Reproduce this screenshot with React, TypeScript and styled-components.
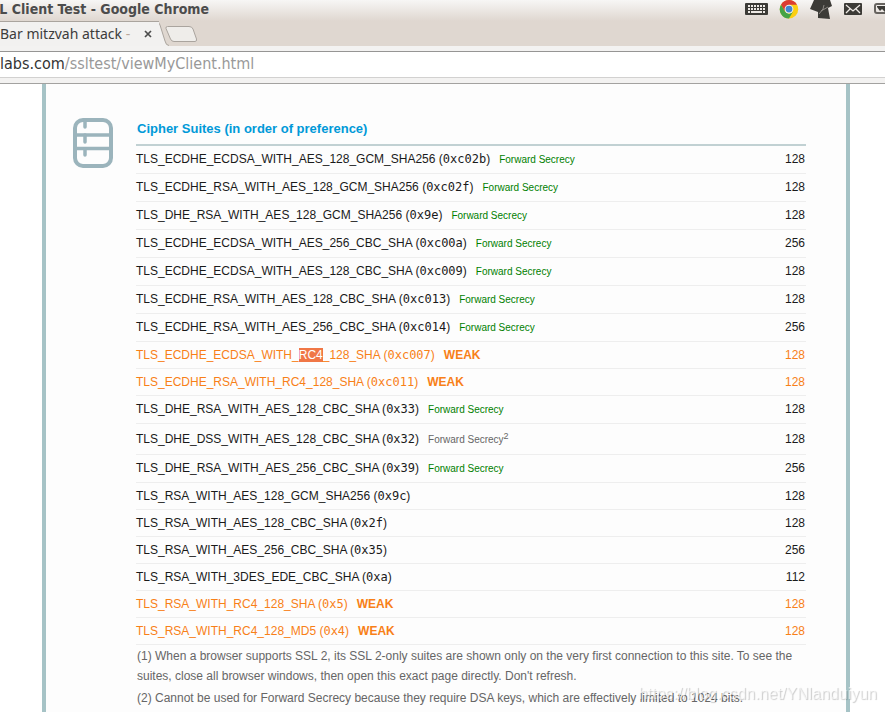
import React from "react";
import styled, { createGlobalStyle } from "styled-components";

const GlobalStyle = createGlobalStyle`
  * { box-sizing: border-box; }
  html { overflow: hidden; }
  body {
    margin: 0;
    background: #ffffff;
    color: #000000;
    font-family: "Liberation Sans", Arial, sans-serif;
    font-size: 12px;
  }
`;

const uiFont = `"Noto Sans", "Open Sans", sans-serif`;
const condensedFont = `"DejaVu Sans Condensed", "DejaVu Sans", sans-serif`;

const Browser = styled.div`
  display: flex;
  flex-direction: column;
  height: 100vh;
  overflow: hidden;
`;

const TitleBar = styled.header`
  display: flex;
  justify-content: space-between;
  flex: none;
  height: 21px;
  overflow: hidden;
  background: linear-gradient(#f7f6f5, #dfd7d0);
`;

const WindowTitle = styled.div`
  display: flex;
  justify-content: flex-end;
  width: 209px;
  overflow: hidden;
  color: #4c4c4c;
  font-family: ${condensedFont};
  font-size: 14px;
  font-weight: 700;
  line-height: 18px;
  white-space: nowrap;
`;

const Tray = styled.div`
  display: flex;
  align-items: flex-start;
  gap: 11px;
  overflow: hidden;

  svg { display: block; flex: none; }
`;

const TabStrip = styled.div`
  display: flex;
  flex: none;
  height: 25px;
  background: #dfd7d0;
`;

const Tab = styled.div`
  display: flex;
  align-items: center;
  width: 159px;
  height: 25px;
  background: #f2f1f0;
  border-top: 1px solid #aaa49e;
  font-family: ${uiFont};
  color: #3c3c3c;
  overflow: hidden;
`;

const TabTitle = styled.span`
  flex: 1;
  overflow: hidden;
  font-size: 14px;
  line-height: 22px;
  white-space: nowrap;
`;

const Fade = styled.span`
  color: #b9a79b;
`;

const TabClose = styled.button`
  display: flex;
  width: 22px;
  padding: 0 7px;
  border: 0;
  background: none;
`;

const NewTab = styled.button`
  display: block;
  height: 25px;
  padding: 0;
  border: 0;
  background: none;
`;

const Toolbar = styled.div`
  flex: none;
  height: 38px;
  padding: 5px 0;
  background: #f3f2f1;
  border-bottom: 1px solid #a3a2a0;
`;

const Address = styled.div`
  height: 27px;
  background: #ffffff;
  border-top: 1px solid #969594;
  border-bottom: 1px solid #d2d1d0;
  font-family: ${condensedFont};
  font-size: 16px;
  line-height: 24px;
  color: #333333;
  white-space: nowrap;
  outline: none;
`;

const Path = styled.span`
  color: #999999;
`;

const Page = styled.div`
  flex: 1;
  display: flex;
  min-height: 0;
  padding: 0 35px 0 42px;
  overflow: hidden;
`;

const Panel = styled.main`
  flex: 1;
  display: flex;
  align-items: flex-start;
  gap: 23px;
  padding: 34px 40px 0 27px;
  background: #fdfdfd;
  border: solid #a6c3c6;
  border-width: 0 4px;
`;

const SectionIcon = styled.svg`
  display: block;
  flex: none;
`;

const Section = styled.section`
  flex: 1;
`;

const SuiteTable = styled.table`
  width: 100%;
  border-collapse: separate;
  border-spacing: 0;
`;

const Heading = styled.th`
  height: 28px;
  padding: 1px 0 6px 1px;
  border-bottom: 2px solid #c1d1d3;
  color: #0099d8;
  font-size: 13px;
  line-height: 19px;
  text-align: left;
`;

type Kind = "secure" | "noted" | "weak" | "plain";

const rowHeights: Record<Kind, number> = { secure: 28, noted: 31, weak: 27, plain: 27 };

const SuiteRow = styled.tr<{ $kind: Kind }>`
  height: ${(p) => rowHeights[p.$kind]}px;
  color: ${(p) => (p.$kind === "weak" ? "#f88017" : "#1a1a1a")};
  vertical-align: ${(p) => (p.$kind === "noted" ? "middle" : "top")};
`;

const Cell = styled.td<{ $end?: boolean }>`
  padding: ${(p) => (p.$end ? "3px 1px 3px 0" : "3px 0")};
  border-bottom: 1px solid #eeeeee;
  line-height: 20px;
  text-align: ${(p) => (p.$end ? "right" : "left")};
  white-space: nowrap;
`;

const Code = styled.code`
  font-family: "DejaVu Sans Mono", monospace;
  font-size: 12px;
  line-height: 1;
`;

const Secrecy = styled.span<{ $muted?: boolean }>`
  margin-left: 9px;
  color: ${(p) => (p.$muted ? "#666666" : "#008000")};
  font-size: 10px;

  sup { font-size: 9px; line-height: 1; }
`;

const Weak = styled.b`
  margin-left: 9px;
`;

const Selected = styled.mark`
  background: #f07746;
  color: #ffffff;
`;

const Note = styled.p`
  margin: 1px 0 2px 1px;
  color: #666666;
  line-height: 20px;
`;

const Watermark = styled.div`
  position: fixed;
  right: 8px;
  bottom: 8px;
  color: rgba(255, 255, 255, 0.6);
  font-size: 16px;
  line-height: 20px;
  text-shadow: 1px 1px 1px rgba(0, 0, 0, 0.2);
  pointer-events: none;
`;

type Suite = { name: string; code: string; kind: Kind; bits: number; selected?: string };

const suites: Suite[] = [
  { name: "TLS_ECDHE_ECDSA_WITH_AES_128_GCM_SHA256", code: "0xc02b", kind: "secure", bits: 128 },
  { name: "TLS_ECDHE_RSA_WITH_AES_128_GCM_SHA256", code: "0xc02f", kind: "secure", bits: 128 },
  { name: "TLS_DHE_RSA_WITH_AES_128_GCM_SHA256", code: "0x9e", kind: "secure", bits: 128 },
  { name: "TLS_ECDHE_ECDSA_WITH_AES_256_CBC_SHA", code: "0xc00a", kind: "secure", bits: 256 },
  { name: "TLS_ECDHE_ECDSA_WITH_AES_128_CBC_SHA", code: "0xc009", kind: "secure", bits: 128 },
  { name: "TLS_ECDHE_RSA_WITH_AES_128_CBC_SHA", code: "0xc013", kind: "secure", bits: 128 },
  { name: "TLS_ECDHE_RSA_WITH_AES_256_CBC_SHA", code: "0xc014", kind: "secure", bits: 256 },
  { name: "TLS_ECDHE_ECDSA_WITH_RC4_128_SHA", code: "0xc007", kind: "weak", bits: 128, selected: "RC4" },
  { name: "TLS_ECDHE_RSA_WITH_RC4_128_SHA", code: "0xc011", kind: "weak", bits: 128 },
  { name: "TLS_DHE_RSA_WITH_AES_128_CBC_SHA", code: "0x33", kind: "secure", bits: 128 },
  { name: "TLS_DHE_DSS_WITH_AES_128_CBC_SHA", code: "0x32", kind: "noted", bits: 128 },
  { name: "TLS_DHE_RSA_WITH_AES_256_CBC_SHA", code: "0x39", kind: "secure", bits: 256 },
  { name: "TLS_RSA_WITH_AES_128_GCM_SHA256", code: "0x9c", kind: "plain", bits: 128 },
  { name: "TLS_RSA_WITH_AES_128_CBC_SHA", code: "0x2f", kind: "plain", bits: 128 },
  { name: "TLS_RSA_WITH_AES_256_CBC_SHA", code: "0x35", kind: "plain", bits: 256 },
  { name: "TLS_RSA_WITH_3DES_EDE_CBC_SHA", code: "0xa", kind: "plain", bits: 112 },
  { name: "TLS_RSA_WITH_RC4_128_SHA", code: "0x5", kind: "weak", bits: 128 },
  { name: "TLS_RSA_WITH_RC4_128_MD5", code: "0x4", kind: "weak", bits: 128 },
];

function SuiteName({ name, selected }: { name: string; selected?: string }) {
  if (!selected) return <>{name}</>;
  const [before, after] = name.split(selected);
  return <>{before}<Selected>{selected}</Selected>{after}</>;
}

function TrayIcons() {
  return (
    <Tray>
      <svg width="24" height="20" viewBox="0 0 24 20" aria-label="Keyboard">
        <rect x="1" y="3" width="23" height="12" rx="1" fill="#3c3b37" />
        <path d="M4 6h17M4 9h17" stroke="#eeeae6" strokeWidth="2" strokeDasharray="2 1" />
        <path d="M4 12h2M7 12h11M19 12h2" stroke="#eeeae6" strokeWidth="2" />
      </svg>
      <svg width="20" height="20" viewBox="0 0 20 20" aria-label="Chrome">
        <circle cx="10" cy="9.3" r="9.2" fill="#fbcf12" />
        <path d="M2 4.700A9.200 9.200 0 0 1 18 4.700H10L6 11.600Z" fill="#dc3c31" />
        <path d="M2 4.700A9.200 9.200 0 0 0 10 18.500L14 11.600L10 14L6 11.600Z" fill="#45a346" />
        <circle cx="10" cy="9.100" r="4.400" fill="#f2f2ed" />
        <circle cx="10" cy="9.100" r="3.400" fill="#4285cf" />
      </svg>
      <svg width="22" height="20" viewBox="0 0 22 20" aria-label="Input method">
        <path d="M4 0L20 0L22 6L18 8L20 19L8 18L8 12L0 9Z" fill="#3c3b37" />
        <path d="M9 14L13 9L14 5M11 11L18 7" fill="none" stroke="#8d8984" strokeWidth="1" />
      </svg>
      <svg width="19" height="20" viewBox="0 0 19 20" aria-label="Mail">
        <rect x="1" y="3" width="18" height="12" rx="1" fill="#3c3b37" />
        <path d="M3 5L10 11L17 5M3 13L7 9M17 13L13 9" fill="none" stroke="#eeeae6" strokeWidth="1.300" />
      </svg>
      <svg width="12" height="20" viewBox="0 0 12 20" aria-label="Battery">
        <path d="M14 4H4Q2 4 2 6V11Q2 13 4 13H14" fill="none" stroke="#66635f" strokeWidth="2" />
        <path d="M4 6H12V12L9 9L7 11L4 7Z" fill="#3c3b37" />
      </svg>
    </Tray>
  );
}

export default function App() {
  return (
    <>
      <GlobalStyle />
      <Browser>
        <TitleBar>
          <WindowTitle>L Client Test - Google Chrome</WindowTitle>
          <TrayIcons />
        </TitleBar>
        <TabStrip>
          <Tab>
            <TabTitle>Bar mitzvah attack <Fade>-</Fade></TabTitle>
            <TabClose aria-label="Close tab">
              <svg width="8" height="8" viewBox="0 0 8 8">
                <path d="M1 1L7 7M7 1L1 7" stroke="#4c4c4c" strokeWidth="1.700" />
              </svg>
            </TabClose>
          </Tab>
          <NewTab aria-label="New tab">
            <svg width="40" height="25" viewBox="4 0 40 25">
              <path d="M0 0.500H1Q4 0.500 5 4L10 20Q11 24.500 14 24.500V25H0Z" fill="#f2f1f0" />
              <path d="M0 0.500H1Q4 0.500 5 4L10 20Q11 24.500 14 24.500" fill="none" stroke="#aaa49e" />
              <path d="M12.500 5.500H34Q37 5.500 38 8L41.500 18Q42 20.500 40 20.500H19Q16.500 20.500 15.500 18L11 7.500Q10.500 5.500 12.500 5.500Z" fill="#efedea" stroke="#aaa49e" />
            </svg>
          </NewTab>
        </TabStrip>
        <Toolbar>
          <Address role="textbox" aria-label="Address" contentEditable suppressContentEditableWarning spellCheck={false}>
            labs.com<Path>/ssltest/viewMyClient.html</Path>
          </Address>
        </Toolbar>
        <Page>
          <Panel>
            <SectionIcon width="40" height="50" viewBox="0 0 40 50" aria-hidden="true">
              <g fill="none" stroke="#9bb4bc">
                <rect x="2" y="2" width="36" height="46" rx="8" strokeWidth="4" />
                <path d="M3 17H37M3 30.500H37" strokeWidth="3.500" />
                <path d="M12 3V9M12 17V24M12 31V37" strokeWidth="3.500" strokeLinecap="round" />
              </g>
            </SectionIcon>
            <Section>
              <SuiteTable>
                <thead>
                  <tr><Heading colSpan={2}>Cipher Suites (in order of preference)</Heading></tr>
                </thead>
                <tbody>
                  {suites.map((s) => (
                    <SuiteRow key={s.name} $kind={s.kind}>
                      <Cell>
                        <SuiteName name={s.name} selected={s.selected} /> (<Code>{s.code}</Code>)
                        {s.kind === "secure" && <Secrecy>Forward Secrecy</Secrecy>}
                        {s.kind === "noted" && <Secrecy $muted>Forward Secrecy<sup>2</sup></Secrecy>}
                        {s.kind === "weak" && <Weak>WEAK</Weak>}
                      </Cell>
                      <Cell $end>{s.bits}</Cell>
                    </SuiteRow>
                  ))}
                </tbody>
              </SuiteTable>
              <Note>
                (1) When a browser supports SSL 2, its SSL 2-only suites are shown only on the very first connection to
                this site. To see the suites, close all browser windows, then open this exact page directly. Don't refresh.
              </Note>
              <Note>
                (2) Cannot be used for Forward Secrecy because they require DSA keys, which are effectively limited to
                1024 bits.
              </Note>
            </Section>
          </Panel>
        </Page>
        <Watermark>https://blog.csdn.net/YNlanduiyun</Watermark>
      </Browser>
    </>
  );
}
